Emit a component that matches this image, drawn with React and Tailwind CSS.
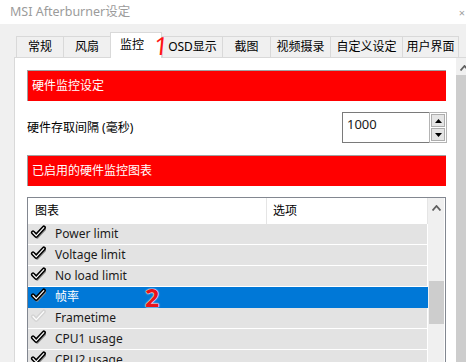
import React from 'react';

const tabs = [
  { label: '常规', w: 'w-[47px]' },
  { label: '风扇', w: 'w-[47px]' },
  { label: '监控', w: 'w-[52px]', selected: true },
  { label: 'OSD显示', w: 'w-[60px]' },
  { label: '截图', w: 'w-[48px]' },
  { label: '视频摄录', w: 'w-[60px]' },
  { label: '自定义设定', w: 'w-[72px]' },
  { label: '用户界面', w: 'w-[57px]', last: true },
];

const rows = [
  { label: 'Power limit', checked: true },
  { label: 'Voltage limit', checked: true },
  { label: 'No load limit', checked: true },
  { label: '帧率', checked: true, selected: true },
  { label: 'Frametime', checked: false },
  { label: 'CPU1 usage', checked: true },
  { label: 'CPU2 usage', checked: true },
];

function Check({ on }) {
  const outer = on ? '#000000' : '#d4d4d4';
  return (
    <svg width="16" height="14" viewBox="0 0 16 14">
      {on && <path d="M3 7.5 L6.2 10.8 L13.8 2.6" fill="none" stroke="#8a8a8a" strokeWidth="4" strokeLinecap="round" strokeLinejoin="round" transform="translate(0.8,0.9)" />}
      <path d="M3 7.5 L6.2 10.8 L13.8 2.6" fill="none" stroke={outer} strokeWidth="4.2" strokeLinecap="round" strokeLinejoin="round" />
      <path d="M3 7.5 L6.2 10.8 L13.8 2.6" fill="none" stroke="#ffffff" strokeWidth="1.2" strokeLinecap="round" strokeLinejoin="round" />
    </svg>
  );
}

function Chevron() {
  return (
    <svg width="9" height="6" viewBox="0 0 9 6">
      <path d="M0.5 5.5 L4.5 1 L8.5 5.5" fill="none" stroke="#606060" strokeWidth="1.8" />
    </svg>
  );
}

function Tri({ up }) {
  return (
    <svg width="7" height="4" viewBox="0 0 7 4">
      <path d={up ? 'M0 4 L3.5 0 L7 4 Z' : 'M0 0 L3.5 4 L7 0 Z'} fill="#000" />
    </svg>
  );
}

export default function App() {
  return (
    <div className="w-[466px] h-[362px] overflow-hidden bg-[#f0f0f0] font-['Noto_Sans','Noto_Sans_CJK_SC',sans-serif] text-[12px] text-black">
      {/* Title bar */}
      <div className="h-[24px] bg-white flex items-center pl-[10px] pr-[1px]">
        <span className="text-[#9b9b9b] text-[12.5px] leading-none">MSI Afterburner设定</span>
        <span className="ml-auto text-[#a0a0a0] text-[11px] leading-none">×</span>
      </div>
      {/* Tabs */}
      <div className="h-[33px] flex items-end pl-[16px]">
        {tabs.map((t) =>
          t.selected ? (
            <div
              key={t.label}
              className={`${t.w} h-[26px] mb-[-1px] relative z-10 bg-white border-t border-l border-r border-[#d9d9d9] flex items-start justify-center pt-[4px] pr-[8px]`}
            >
              <span className="leading-[16px]">{t.label}</span>
              <span className="absolute left-[43px] top-[-1px] text-[#ff1515] text-[25px] leading-[26px] font-normal -skew-x-6">1</span>
            </div>
          ) : (
            <div
              key={t.label}
              className={`${t.w} h-[21px] border-t border-l ${t.last ? 'border-r' : ''} border-[#d9d9d9] flex items-center justify-center`}
            >
              <span className="leading-[16px]">{t.label}</span>
            </div>
          )
        )}
      </div>
      {/* Panel */}
      <div className="flex h-[305px]">
        <div className="w-[14px] shrink-0" />
        <div className="flex-1 flex bg-white border-t border-l border-[#d9d9d9] overflow-hidden">
          <div className="w-[419px] shrink-0 ml-[12px] pt-[12px] flex flex-col">
            <div className="h-[31px] shrink-0 bg-[#ff0000] border-t border-l border-[#a0a0a0] flex items-center pl-[4px] text-white">
              硬件监控设定
            </div>
            <div className="mt-[11px] h-[31px] shrink-0 flex items-center">
              <span className="mt-[1px]">硬件存取间隔 (毫秒)</span>
              <div className="ml-auto -mr-[1px] w-[105px] h-[31px] flex">
                <div className="flex-1 border border-[#7a7a7a] border-r-0 pl-[4px] pt-[3px] leading-[16px] text-[13px] text-[#1a1a1a]">
                  1000
                </div>
                <div className="w-[18px] border border-[#b4b4b4] flex flex-col p-[1px] gap-[1px]">
                  <div className="flex-1 bg-[#e5e5e5] border border-[#adadad] flex items-center justify-center">
                    <Tri up />
                  </div>
                  <div className="flex-1 bg-[#e5e5e5] border border-[#adadad] flex items-center justify-center">
                    <Tri />
                  </div>
                </div>
              </div>
            </div>
            <div className="mt-[12px] h-[31px] shrink-0 bg-[#ff0000] border-t border-l border-[#a0a0a0] flex items-center pl-[4px] text-white">
              已启用的硬件监控图表
            </div>
            <div className="mt-[11px] border border-[#828790] flex h-[200px] shrink-0">
              <div className="w-[400px] shrink-0 flex flex-col">
                <div className="h-[26px] shrink-0 flex bg-white">
                  <div className="w-[239px] border-r border-[#e5e5e5] pl-[7px] flex items-center">图表</div>
                  <div className="flex-1 border-r border-[#e5e5e5] pl-[6px] flex items-center">选项</div>
                </div>
                {rows.map((r) => (
                  <div
                    key={r.label}
                    className={`h-[21px] shrink-0 flex items-center relative border-b ${
                      r.selected ? 'bg-[#0078d7] border-[#0078d7] text-white mr-0' : 'bg-[#e3e3e3] border-white mr-[1px] text-[#1b1b1b]'
                    }`}
                  >
                    <div className="w-[27px] pl-[2px] flex items-center -mt-[4px]">
                      <Check on={r.checked} />
                    </div>
                    <span className="leading-[16px]">{r.label}</span>
                    {r.selected && (
                      <span className="absolute left-[117px] top-[-3px] text-[#e8141b] text-[25px] font-bold leading-[26px] [text-shadow:0_0_1px_#fff,0_0_1px_#fff,0_0_2px_#fff]">
                        2
                      </span>
                    )}
                  </div>
                ))}
              </div>
              <div className="w-[16px] shrink-0 bg-[#f0f0f0] flex flex-col items-center">
                <div className="h-[17px] shrink-0 flex items-center justify-center pt-[2px]">
                  <Chevron />
                </div>
                <div className="mt-[66px] shrink-0 w-[15px] h-[43px] bg-[#cdcdcd]" />
              </div>
              <div className="w-[1px] shrink-0 bg-white" />
            </div>
          </div>
          <div className="w-[10px] shrink-0" />
          <div className="w-[17px] shrink-0 flex flex-col bg-[#f0f0f0]">
            <div className="h-[17px] shrink-0 flex items-center justify-center pt-[2px]">
              <Chevron />
            </div>
            <div className="flex-1 bg-[#cdcdcd]" />
          </div>
        </div>
      </div>
    </div>
  );
}
